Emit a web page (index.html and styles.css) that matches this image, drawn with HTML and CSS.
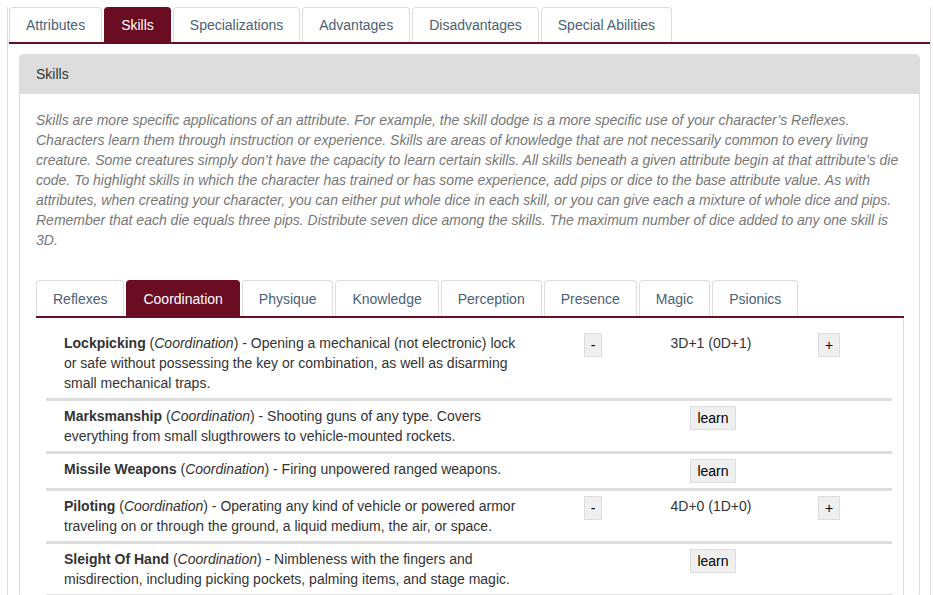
FILE: index.html
```html
<!DOCTYPE html>
<html lang="en">
<head>
<meta charset="utf-8">
<title>Skills</title>
<link rel="stylesheet" href="styles.css">
</head>
<body>
<div class="sheet">
  <ul class="tabs">
    <li class="tab">Attributes</li>
    <li class="tab active">Skills</li>
    <li class="tab">Specializations</li>
    <li class="tab">Advantages</li>
    <li class="tab">Disadvantages</li>
    <li class="tab">Special Abilities</li>
  </ul>
  <div class="sheet-body">
    <div class="panel">
      <div class="panel-heading">Skills</div>
      <div class="panel-body">
        <p class="intro">Skills are more specific applications of an attribute. For example, the skill dodge is a more specific use of your character’s Reflexes. Characters learn them through instruction or experience. Skills are areas of knowledge that are not necessarily common to every living creature. Some creatures simply don’t have the capacity to learn certain skills. All skills beneath a given attribute begin at that attribute’s die code. To highlight skills in which the character has trained or has some experience, add pips or dice to the base attribute value. As with attributes, when creating your character, you can either put whole dice in each skill, or you can give each a mixture of whole dice and pips. Remember that each die equals three pips. Distribute seven dice among the skills. The maximum number of dice added to any one skill is 3D.</p>
        <ul class="tabs inner">
          <li class="tab">Reflexes</li>
          <li class="tab active">Coordination</li>
          <li class="tab">Physique</li>
          <li class="tab">Knowledge</li>
          <li class="tab">Perception</li>
          <li class="tab">Presence</li>
          <li class="tab">Magic</li>
          <li class="tab">Psionics</li>
        </ul>
        <div class="skill-list">
          <div class="skill">
            <div class="skill-desc"><b>Lockpicking</b> (<i>Coordination</i>) - Opening a mechanical (not electronic) lock or safe without possessing the key or combination, as well as disarming small mechanical traps.</div>
            <div class="cell"><button class="btn">-</button></div>
            <div class="cell">3D+1 (0D+1)</div>
            <div class="cell"><button class="btn">+</button></div>
          </div>
          <div class="skill">
            <div class="skill-desc"><b>Marksmanship</b> (<i>Coordination</i>) - Shooting guns of any type. Covers everything from small slugthrowers to vehicle-mounted rockets.</div>
            <div class="cell"></div>
            <div class="cell"><button class="btn learn">learn</button></div>
            <div class="cell"></div>
          </div>
          <div class="skill">
            <div class="skill-desc"><b>Missile Weapons</b> (<i>Coordination</i>) - Firing unpowered ranged weapons.</div>
            <div class="cell"></div>
            <div class="cell"><button class="btn learn">learn</button></div>
            <div class="cell"></div>
          </div>
          <div class="skill">
            <div class="skill-desc"><b>Piloting</b> (<i>Coordination</i>) - Operating any kind of vehicle or powered armor traveling on or through the ground, a liquid medium, the air, or space.</div>
            <div class="cell"><button class="btn">-</button></div>
            <div class="cell">4D+0 (1D+0)</div>
            <div class="cell"><button class="btn">+</button></div>
          </div>
          <div class="skill">
            <div class="skill-desc"><b>Sleight Of Hand</b> (<i>Coordination</i>) - Nimbleness with the fingers and misdirection, including picking pockets, palming items, and stage magic.</div>
            <div class="cell"></div>
            <div class="cell"><button class="btn learn">learn</button></div>
            <div class="cell"></div>
          </div>
        </div>
      </div>
    </div>
  </div>
</div>
</body>
</html>
```
FILE: styles.css
```css
* { box-sizing: border-box; }
html, body { margin: 0; padding: 0; background: #fff; }
body {
  font-family: "Liberation Sans", Arial, sans-serif;
  font-size: 14px;
  line-height: 20px;
  color: #333;
  padding: 7px 2px 0 7px;
  overflow: hidden;
  height: 595px;
}
.sheet {
  border-left: 1px solid #ddd;
  border-right: 1px solid #ddd;
  min-height: 600px;
}
.tabs {
  list-style: none;
  margin: 0 0 0 1px;
  padding: 0;
  display: flex;
  gap: 2px;
  border-bottom: 2px solid #6b0d22;
}
.tab {
  padding: 7px 16px 7px;
  border: 1px solid #ddd;
  border-bottom: none;
  border-radius: 4px 4px 0 0;
  color: #4a6275;
  background: #fff;
}
.tab.active {
  background: #6b0d22;
  border-color: #6b0d22;
  color: #fff;
}
.sheet-body {
  padding: 10px 10px 0 11px;
}
.panel {
  border: 1px solid #ddd;
  border-radius: 4px;
}
.panel-heading {
  background: #ddd;
  padding: 9px 15px 10px 16px;
  color: #333;
  border-radius: 3px 3px 0 0;
}
.panel-body {
  padding: 15px 15px 0 15px;
}
.intro {
  margin: 1px 0 0 1px;
  font-style: italic;
  color: #777;
}
.tabs.inner {
  margin: 30px 0 0 1px;
}
.tabs.inner .tab {
  padding: 8px 16px 7px;
}
.skill-list {
  border-right: 1px solid #ddd;
  padding: 10px 11px 0 11px;
}
.skill {
  display: grid;
  grid-template-columns: 494px 106px 130px 106px;
  align-items: start;
  padding: 5px 0;
  border-bottom: 3px solid #ddd;
}
.skill-desc {
  padding-left: 18px;
  padding-right: 14px;
}
.cell {
  text-align: center;
  min-height: 20px;
}
.btn {
  font-family: "Liberation Sans", Arial, sans-serif;
  font-size: 14px;
  line-height: 20px;
  padding: 1px 6px 1px;
  margin: 0;
  border: 1px solid #ddd;
  background: #efefef;
  color: #000;
  border-radius: 0;
  height: 24px;
  vertical-align: top;
}
.btn.learn {
  margin-left: 4px;
}
```
